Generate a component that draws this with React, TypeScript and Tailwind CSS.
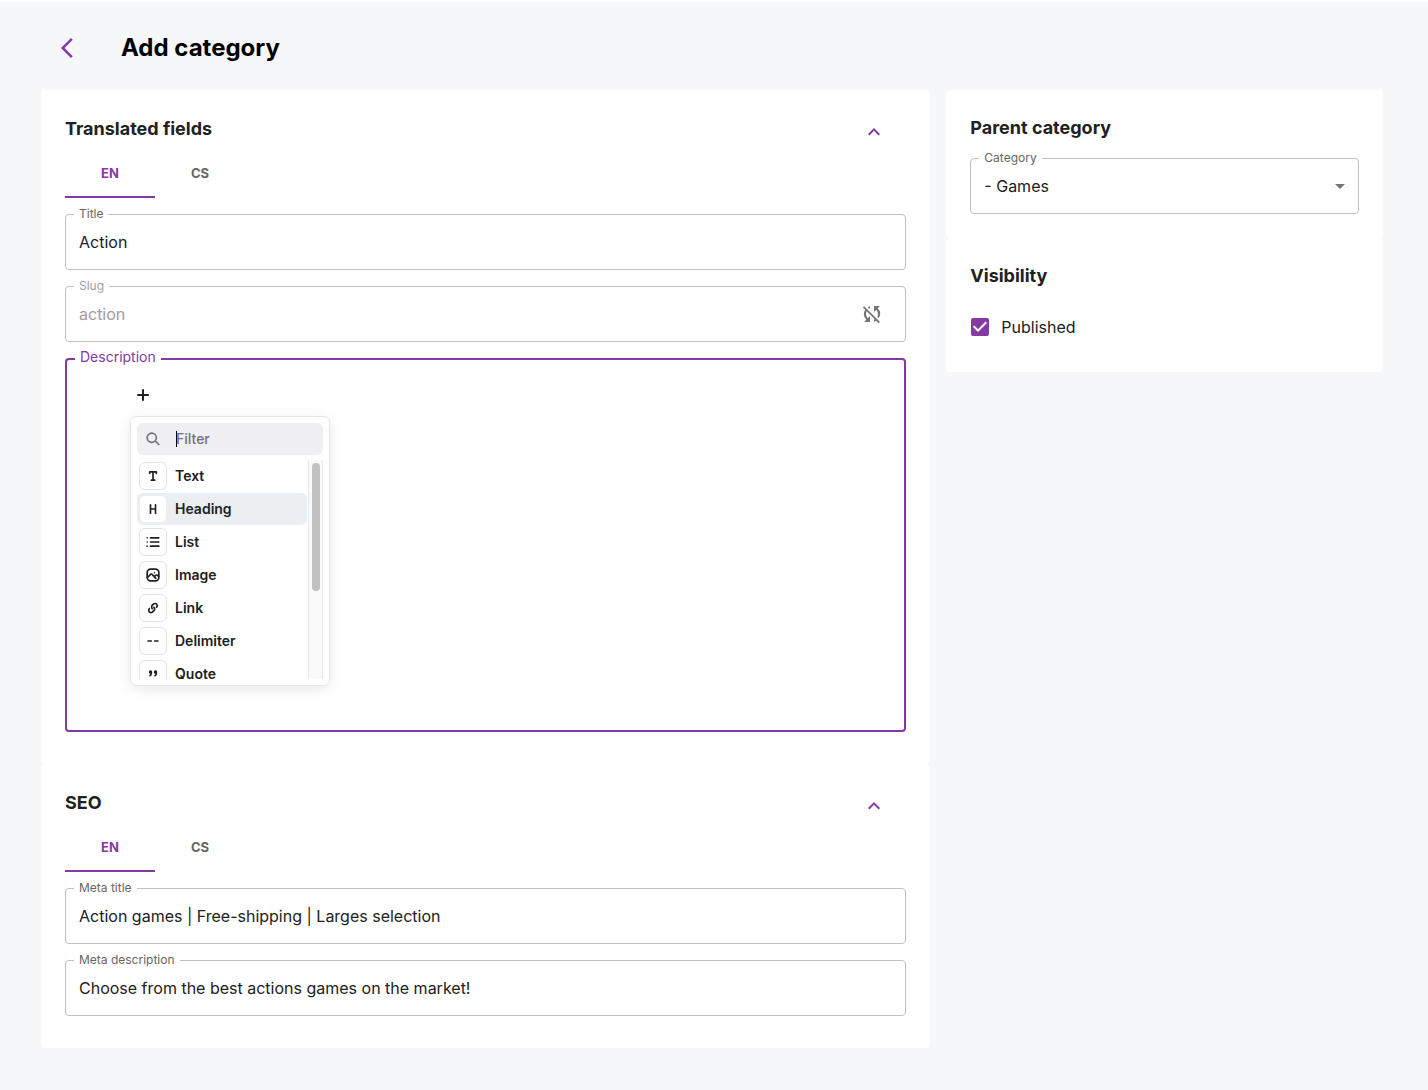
import { useState, type ReactNode } from "react";
import {
  MdArrowBackIosNew,
  MdArrowDropDown,
  MdExpandLess,
  MdSyncDisabled,
} from "react-icons/md";

interface FieldProps {
  id: string;
  label: string;
  value: string;
  disabled?: boolean;
  action?: ReactNode;
}

interface Tool {
  title: string;
  icon: ReactNode;
  isActive?: boolean;
}

const Glyph = ({ size = 20, children }: { size?: number; children: ReactNode }) => (
  <svg
    width={size}
    height={size}
    viewBox="0 0 24 24"
    fill="none"
    stroke="currentColor"
    strokeWidth="2"
    strokeLinecap="round"
    strokeLinejoin="round"
    className="shrink-0"
    aria-hidden="true"
  >
    {children}
  </svg>
);

const tools: Tool[] = [
  {
    title: "Text",
    icon: <path d="M8 9V7.2C8 7.09 8.09 7 8.2 7H12M16 9V7.2C16 7.09 15.91 7 15.8 7H12M12 7V17M12 17H10M12 17H14" />,
  },
  {
    title: "Heading",
    icon: <path d="M9 7V17M9 12H15M15 7V17" />,
    isActive: true,
  },
  {
    title: "List",
    icon: <path d="M9 7H19M9 12H19M9 17H19M5 7H4.99M5 12H4.99M5 17H4.99" />,
  },
  {
    title: "Image",
    icon: (
      <>
        <rect x="5" y="5" width="14" height="14" rx="4" />
        <path d="M5.14 15.32L8.69 11.57C9.03 11.2 9.49 11 9.97 11C10.45 11 10.91 11.2 11.24 11.57L15.39 16M13.58 14.07L15.01 12.53C15.35 12.17 15.81 11.97 16.29 11.97C16.77 11.97 17.23 12.17 17.57 12.53L18.84 13.96M13.78 9.33H13.79" />
      </>
    ),
  },
  {
    title: "Link",
    icon: (
      <path d="M7.7 12.6L7.68 12.62C6.54 13.7 6.52 15.52 7.64 16.63C8.72 17.71 10.48 17.71 11.57 16.63L13.03 15.19C14.07 14.16 14.21 12.53 13.37 11.33L13.22 11.12M16.22 11.12L16.36 10.98C17.29 10.03 17.35 8.52 16.49 7.5C15.57 6.4 13.93 6.25 12.83 7.18L11.39 8.39C10.09 9.48 9.96 11.42 11.09 12.69L11.12 12.72" />
    ),
  },
  {
    title: "Delimiter",
    icon: <path d="M6 12H10M14 12H18" />,
  },
  {
    title: "Quote",
    icon: (
      <path
        fill="currentColor"
        d="M10 10.8H9C8.4 10.8 8 10.4 8 9.8V9.4C8 8.8 8.4 8.4 9 8.4H9.4C9.8 8.4 10 8.8 10 9.2V11.5C10 12.8 9.5 13.6 8.4 14M16 10.8H15C14.4 10.8 14 10.4 14 9.8V9.4C14 8.8 14.4 8.4 15 8.4H15.4C15.8 8.4 16 8.8 16 9.2V11.5C16 12.8 15.5 13.6 14.4 14"
      />
    ),
  },
];

const Tabs = ({ name }: { name: string }) => {
  const [active, setActive] = useState("EN");
  return (
    <div role="tablist" aria-label={name} className="flex mt-1.5 h-12">
      {["EN", "CS"].map((lang) => (
        <button
          key={lang}
          type="button"
          role="tab"
          aria-selected={lang === active}
          onClick={() => setActive(lang)}
          className={`w-[90px] border-y-2 border-t-transparent text-[13px] font-bold ${
            lang === active ? "border-b-[#8439a4] text-[#8439a4]" : "border-b-transparent text-[#666666]"
          }`}
        >
          {lang}
        </button>
      ))}
    </div>
  );
};

const Field = ({ id, label, value, disabled, action }: FieldProps) => (
  <div className="relative mt-4 flex h-14 items-center rounded border border-[#c0c0c0]">
    <label
      htmlFor={id}
      className={`absolute -top-[9px] left-2 bg-white px-[5px] text-xs leading-4 ${
        disabled ? "text-[#9e9e9e]" : "text-[#666666]"
      }`}
    >
      {label}
    </label>
    <input
      id={id}
      type="text"
      defaultValue={value}
      disabled={disabled}
      className="h-full min-w-0 flex-1 bg-transparent px-[13px] text-base text-[#212121] outline-none disabled:text-[#9e9e9e]"
    />
    {action}
  </div>
);

const Panel = ({ title, children }: { title: string; children: ReactNode }) => (
  <section className="rounded bg-white px-6 pt-6 pb-8">
    <div className="flex h-[30px] items-center justify-between">
      <h2 className="text-lg font-bold">{title}</h2>
      <button type="button" aria-label={`Collapse ${title}`} className="mr-5 pt-1.5 text-[#8439a4]">
        <MdExpandLess size={24} />
      </button>
    </div>
    {children}
  </section>
);

const Toolbox = () => (
  <div className="absolute top-14 left-[63px] w-[200px] rounded-md border border-[#e5e6e8] bg-white p-1.5 shadow-[0_3px_15px_-3px_rgba(13,20,33,0.15)]">
    <div className="flex h-8 items-center rounded-md bg-[#f0f0f2] pl-1.5 text-[#6d7282]">
      <Glyph>
        <circle cx="10.5" cy="10.5" r="5.5" />
        <path d="M15.4 15L19 18.6" />
      </Glyph>
      <span className="ml-[13px] h-4 w-px shrink-0 bg-black" />
      <input
        type="text"
        aria-label="Filter"
        placeholder="Filter"
        className="-ml-px w-full min-w-0 bg-transparent text-sm font-medium outline-none placeholder:text-[#6d7282]"
      />
    </div>
    <div className="mt-[5px] flex h-[219px]">
      <ul className="flex min-w-0 flex-1 flex-col gap-px overflow-hidden">
        {tools.map((tool) => (
          <li key={tool.title}>
            <button
              type="button"
              className={`flex h-8 w-full items-center gap-2 rounded-md px-0.5 text-sm font-semibold ${
                tool.isActive ? "bg-[#ebeff2]" : ""
              }`}
            >
              <span
                className={`flex size-7 shrink-0 items-center justify-center rounded-md border bg-white ${
                  tool.isActive ? "border-[#ebeff2]" : "border-[#e2e3e5]"
                }`}
              >
                <Glyph>{tool.icon}</Glyph>
              </span>
              {tool.title}
            </button>
          </li>
        ))}
      </ul>
      <div className="ml-px w-[15px] shrink-0 border-x border-[#e8e8e8] bg-[#fafafa] px-[3px] pt-[3px]">
        <div className="h-32 w-2 rounded-full bg-[#c1c1c1]" />
      </div>
    </div>
  </div>
);

export default function App() {
  return (
    <div className="min-h-screen border-t-2 border-white bg-[#f5f7f9] pr-[45px] pb-10 pl-[41px] font-[Inter,'Liberation_Sans',sans-serif] text-[#212121]">
      <header className="flex h-[88px] items-center pt-1">
        <a href="#back" aria-label="Back" className="ml-3.5 text-[#8439a4]">
          <MdArrowBackIosNew size={24} />
        </a>
        <h1 className="ml-[42px] text-2xl font-bold text-black">Add category</h1>
      </header>

      <main className="grid grid-cols-12 items-start gap-4">
        <div className="col-span-8">
          <Panel title="Translated fields">
            <Tabs name="Translated fields language" />
            <Field id="title" label="Title" value="Action" />
            <Field
              id="slug"
              label="Slug"
              value="action"
              disabled
              action={
                <button type="button" aria-label="Sync slug" className="mr-[21px] text-[#757575]">
                  <MdSyncDisabled size={24} />
                </button>
              }
            />
            <div
              role="group"
              aria-labelledby="description-label"
              className="relative mt-4 h-[374px] rounded border-2 border-[#8439a4]"
            >
              <span
                id="description-label"
                className="absolute -top-[13px] left-2 bg-white px-[5px] text-sm leading-5 text-[#8439a4]"
              >
                Description
              </span>
              <button type="button" aria-label="Add block" className="mt-[23px] ml-16 block">
                <Glyph size={24}>
                  <path d="M12 7V17M7 12H17" />
                </Glyph>
              </button>
              <Toolbox />
            </div>
          </Panel>

          <Panel title="SEO">
            <Tabs name="SEO language" />
            <Field id="meta-title" label="Meta title" value="Action games | Free-shipping | Larges selection" />
            <Field
              id="meta-description"
              label="Meta description"
              value="Choose from the best actions games on the market!"
            />
          </Panel>
        </div>

        <aside className="col-span-4">
          <section className="rounded bg-white p-6">
            <h2 className="text-lg leading-7 font-bold">Parent category</h2>
            <div className="relative mt-4 flex h-14 items-center rounded border border-[#c0c0c0]">
              <label
                htmlFor="category"
                className="absolute -top-[9px] left-2 bg-white px-[5px] text-xs leading-4 text-[#666666]"
              >
                Category
              </label>
              <select
                id="category"
                defaultValue="games"
                className="h-full w-full appearance-none bg-transparent px-[13px] text-base outline-none"
              >
                <option value="games">- Games</option>
              </select>
              <MdArrowDropDown
                size={24}
                className="pointer-events-none absolute right-1.5 text-[#757575]"
              />
            </div>
          </section>

          <section className="rounded bg-white p-6">
            <h2 className="text-lg leading-7 font-bold">Visibility</h2>
            <label className="mt-4 flex h-[42px] items-center text-base">
              <span className="relative ml-px size-[18px]">
                <input
                  type="checkbox"
                  defaultChecked
                  className="peer block size-[18px] appearance-none rounded-xs border-2 border-[#757575] checked:border-[#8439a4] checked:bg-[#8439a4]"
                />
                <svg
                  viewBox="0 0 18 18"
                  className="pointer-events-none absolute inset-0 hidden fill-white peer-checked:block"
                  aria-hidden="true"
                >
                  <path d="M7 14L2 9l1.41-1.41L7 11.17l7.59-7.59L16 5z" />
                </svg>
              </span>
              <span className="ml-3">Published</span>
            </label>
          </section>
        </aside>
      </main>
    </div>
  );
}
